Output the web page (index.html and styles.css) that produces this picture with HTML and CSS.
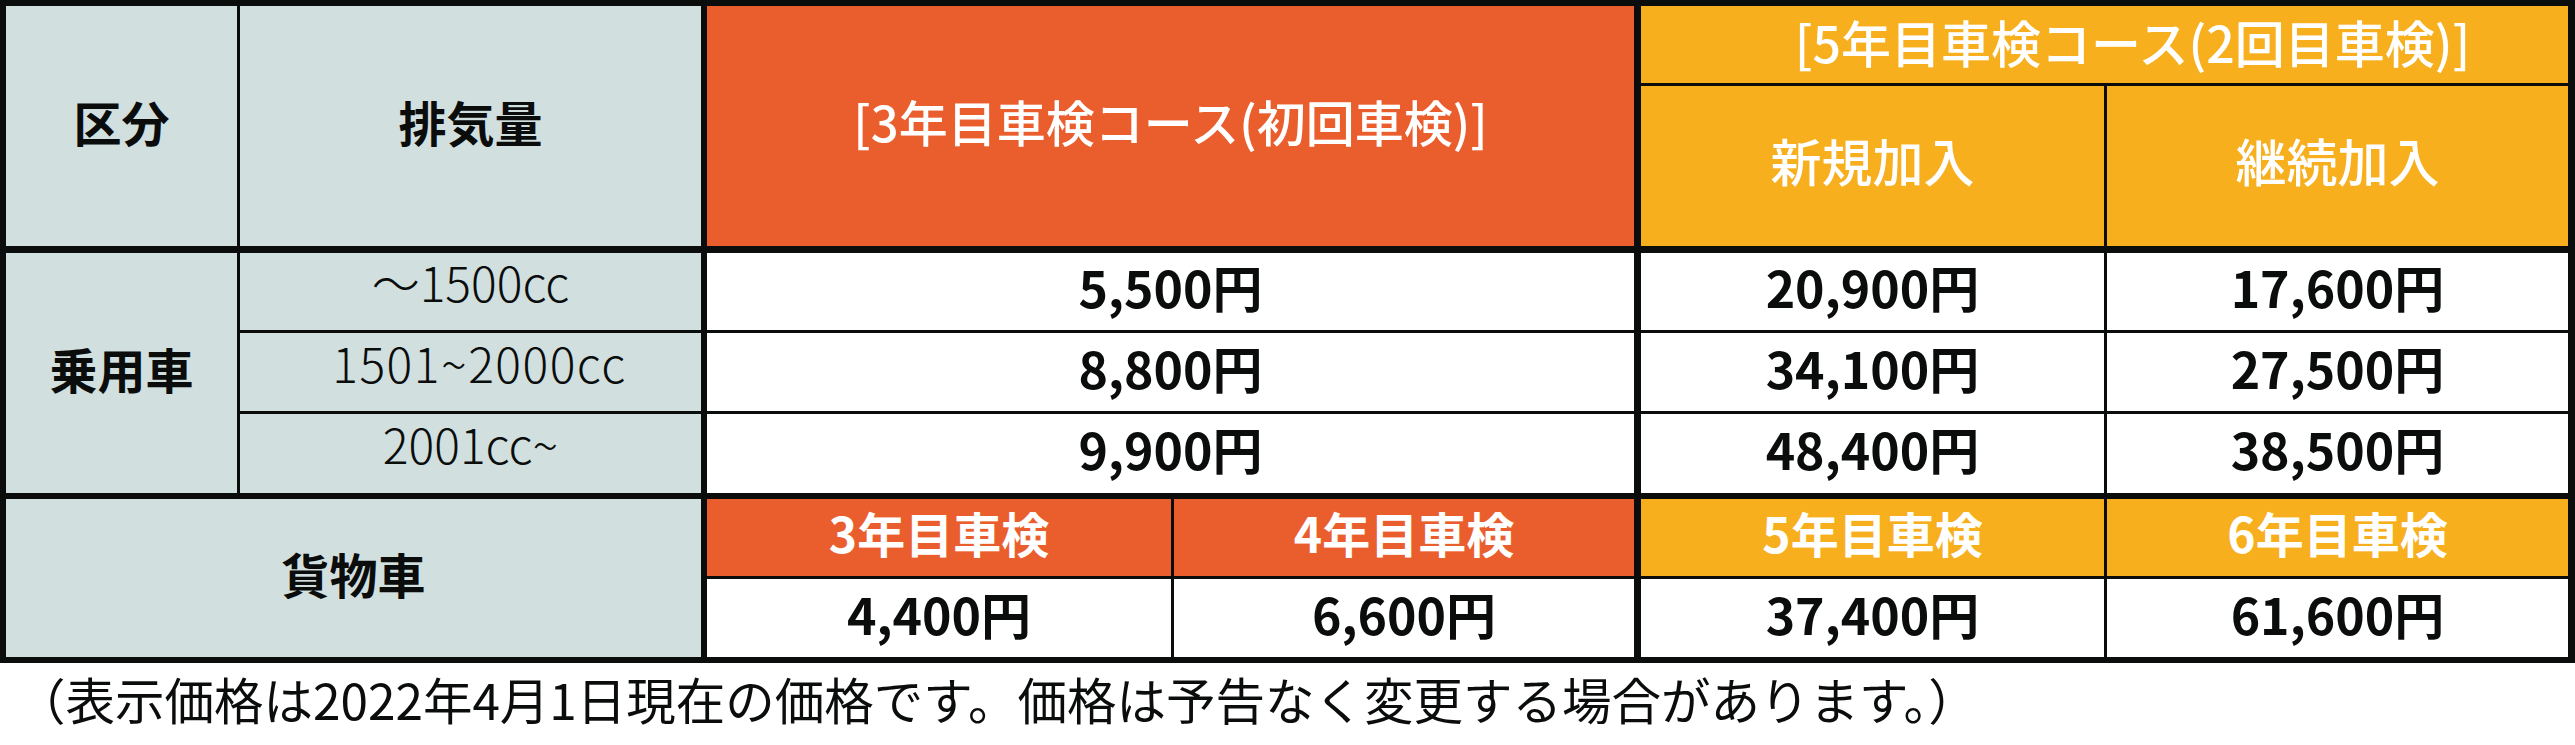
FILE: index.html
```html
<!DOCTYPE html>
<html lang="ja">
<head>
<meta charset="utf-8">
<title>車検コース料金表</title>
<link rel="stylesheet" href="styles.css">
</head>
<body>
<div class="price-table">
  <div class="cell label span-r2 head-b">区分</div>
  <div class="cell label span-r2 rule-r head-b">排気量</div>
  <div class="cell orange course span-c2 span-r2 edge-r head-b">[3年目車検コース(初回車検)]</div>
  <div class="cell yellow course course-second span-c2 edge-r">[5年目車検コース(2回目車検)]</div>
  <div class="cell yellow sub head-b">新規加入</div>
  <div class="cell yellow sub edge-r head-b">継続加入</div>

  <div class="cell label span-r3 rule-b">乗用車</div>
  <div class="cell label disp rule-r">～1500cc</div>
  <div class="cell price span-c2 edge-r">5,500円</div>
  <div class="cell price">20,900円</div>
  <div class="cell price edge-r">17,600円</div>

  <div class="cell label disp disp-range rule-r">1501~2000cc</div>
  <div class="cell price span-c2 edge-r">8,800円</div>
  <div class="cell price">34,100円</div>
  <div class="cell price edge-r">27,500円</div>

  <div class="cell label disp rule-r rule-b">2001cc~</div>
  <div class="cell price span-c2 edge-r rule-b">9,900円</div>
  <div class="cell price rule-b">48,400円</div>
  <div class="cell price edge-r rule-b">38,500円</div>

  <div class="cell label span-c2 span-r2 rule-r rule-b">貨物車</div>
  <div class="cell orange sub strong">3年目車検</div>
  <div class="cell orange sub strong edge-r">4年目車検</div>
  <div class="cell yellow sub strong">5年目車検</div>
  <div class="cell yellow sub strong edge-r">6年目車検</div>

  <div class="cell price rule-b">4,400円</div>
  <div class="cell price edge-r rule-b">6,600円</div>
  <div class="cell price rule-b">37,400円</div>
  <div class="cell price edge-r rule-b">61,600円</div>
</div>
<p class="note">（表示価格は2022年4月1日現在の価格です。価格は予告なく変更する場合があります。）</p>
</body>
</html>
```
FILE: styles.css
```css
html, body {
  margin: 0;
  padding: 0;
  background: #ffffff;
}

body {
  width: 2575px;
  font-family: "Noto Sans CJK JP", "Noto Sans", sans-serif;
  color: #0a0d0c;
}

.price-table {
  display: grid;
  grid-template-columns: 234px 467px 467px 467px 466px 468px;
  grid-template-rows: 80px 167px 80px 81px 85px 80px 84px;
  border-top: 6px solid #0a0d0c;
  border-left: 6px solid #0a0d0c;
  width: 2575px;
  box-sizing: border-box;
}

.cell {
  box-sizing: border-box;
  display: flex;
  align-items: center;
  justify-content: center;
  padding-bottom: 11px;
  background: #ffffff;
  border-right: 3px solid #0a0d0c;
  border-bottom: 3px solid #0a0d0c;
  line-height: 1;
  white-space: nowrap;
}

.span-c2 { grid-column: span 2; }
.span-r2 { grid-row: span 2; }
.span-r3 { grid-row: span 3; }

.rule-r { border-right-width: 6px; }
.edge-r { border-right-width: 7px; }
.rule-b { border-bottom-width: 6px; }
.head-b { border-bottom-width: 7px; }

.label {
  background: #d2dfdf;
  font-size: 48px;
  font-weight: 700;
}

.label.disp {
  font-size: 48px;
  font-weight: 300;
  padding-bottom: 21px;
}

.label.disp-range {
  padding-left: 18px;
  letter-spacing: 1.5px;
}

.orange { background: #ea5e2e; color: #ffffff; }
.yellow { background: #f7af1e; color: #ffffff; }

.course {
  font-size: 49px;
  font-weight: 500;
}

.course-second {
  font-size: 50px;
  padding-bottom: 8px;
  padding-left: 56px;
}

.sub {
  font-size: 51px;
  font-weight: 500;
}

.sub.strong {
  font-size: 48px;
  font-weight: 700;
}

.price {
  font-size: 50px;
  font-weight: 700;
}

.note {
  margin: 0;
  padding: 6px 0 0 16px;
  font-size: 49.5px;
  font-weight: 400;
  line-height: 1.2;
}
```
